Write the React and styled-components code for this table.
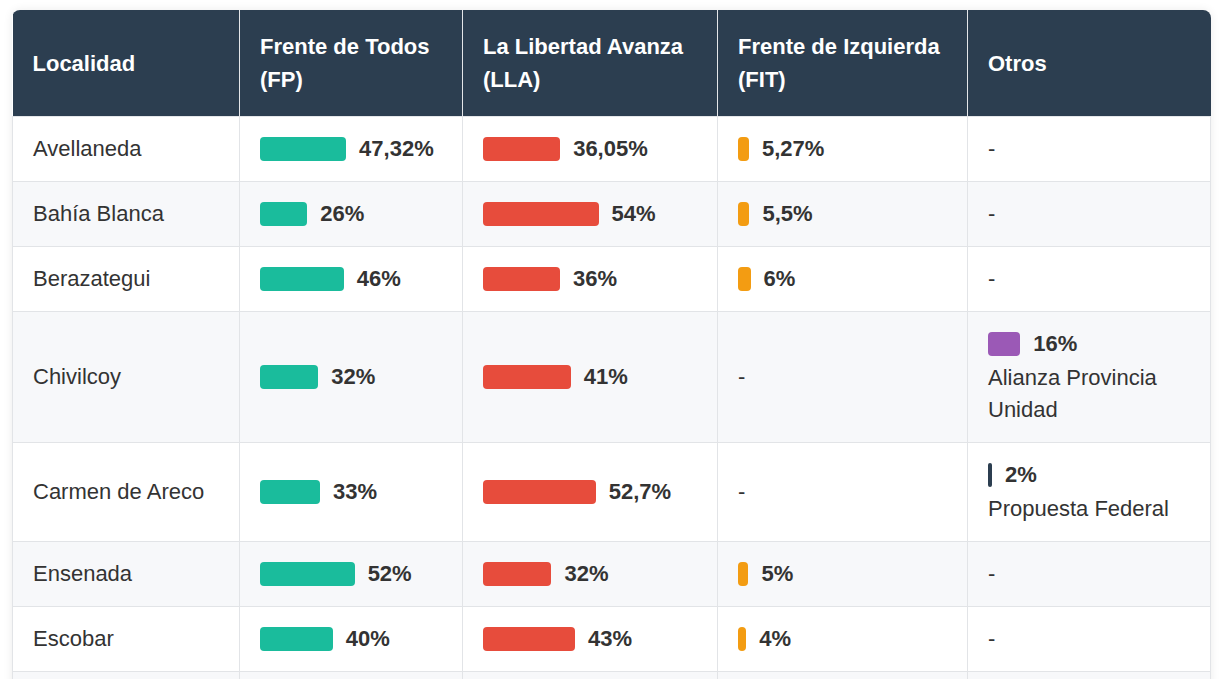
import React from "react";
import styled, { createGlobalStyle } from "styled-components";

const Global = createGlobalStyle`
  html, body { margin: 0; padding: 0; background: #ffffff; }
  body { font-family: "Liberation Sans", Arial, sans-serif; color: #333333; }
`;

const Wrap = styled.div`
  margin: 10px 10px 0 12px;
  border-radius: 8px;
  overflow: hidden;
  box-shadow: 0 0 10px rgba(0, 0, 0, 0.08);
`;

const Table = styled.table`
  width: 100%;
  border-collapse: collapse;
  table-layout: fixed;
  font-size: 22px;
  line-height: 32px;
`;

const Th = styled.th`
  background: #2c3e50;
  color: #ffffff;
  font-weight: bold;
  text-align: left;
  vertical-align: middle;
  line-height: 33px;
  padding: 20px 20px;
  border: 1px solid #e4e6e9;
  border-top: none;
  &:first-child { border-left: none; }
  &:last-child { border-right: none; }
`;

const Tr = styled.tr`
  background: ${(p) => (p.$alt ? "#f7f8fa" : "#ffffff")};
`;

const Td = styled.td`
  padding: 16px 20px;
  vertical-align: middle;
  border: 1px solid #e2e4e7;
  color: #333333;
`;

const BarLine = styled.div`
  display: flex;
  align-items: center;
  gap: 13px;
  min-height: 32px;
  margin-bottom: ${(p) => (p.$stacked ? "2px" : "0")};
`;

const Bar = styled.span`
  flex-shrink: 0;
  height: 24px;
  border-radius: 4px;
  background: ${(p) => p.$color};
`;

const Pct = styled.span`
  font-weight: bold;
  color: #333333;
  white-space: nowrap;
`;

const PartyName = styled.div`
  color: #333333;
`;

const COLORS = {
  fp: "#1abc9c",
  lla: "#e74c3c",
  fit: "#f39c12",
};

const rows = [
  { loc: "Avellaneda", fp: [47.32, "47,32%"], lla: [36.05, "36,05%"], fit: [5.27, "5,27%"] },
  { loc: "Bahía Blanca", fp: [26, "26%"], lla: [54, "54%"], fit: [5.5, "5,5%"] },
  { loc: "Berazategui", fp: [46, "46%"], lla: [36, "36%"], fit: [6, "6%"] },
  {
    loc: "Chivilcoy",
    fp: [32, "32%"],
    lla: [41, "41%"],
    fit: null,
    otros: { v: 16, label: "16%", name: "Alianza Provincia Unidad", color: "#9b59b6" },
  },
  {
    loc: "Carmen de Areco",
    fp: [33, "33%"],
    lla: [52.7, "52,7%"],
    fit: null,
    otros: { v: 2, label: "2%", name: "Propuesta Federal", color: "#2c3e50" },
  },
  { loc: "Ensenada", fp: [52, "52%"], lla: [32, "32%"], fit: [5, "5%"] },
  { loc: "Escobar", fp: [40, "40%"], lla: [43, "43%"], fit: [4, "4%"] },
  { loc: "General Pueyrredón", fp: [38, "38%"], lla: [42, "42%"], fit: [3, "3%"] },
];

function BarCell({ value, color }) {
  if (!value) return <Td>-</Td>;
  return (
    <Td>
      <BarLine>
        <Bar $color={color} style={{ width: `${value[0]}%` }} />
        <Pct>{value[1]}</Pct>
      </BarLine>
    </Td>
  );
}

export default function App() {
  return (
    <>
      <Global />
      <Wrap>
        <Table>
          <colgroup>
            <col style={{ width: 227 }} />
            <col style={{ width: 223 }} />
            <col style={{ width: 255 }} />
            <col style={{ width: 250 }} />
            <col />
          </colgroup>
          <thead>
            <tr>
              <Th>Localidad</Th>
              <Th>Frente de Todos (FP)</Th>
              <Th>La Libertad Avanza (LLA)</Th>
              <Th>Frente de Izquierda (FIT)</Th>
              <Th>Otros</Th>
            </tr>
          </thead>
          <tbody>
            {rows.map((r, i) => (
              <Tr key={r.loc} $alt={i % 2 === 1}>
                <Td>{r.loc}</Td>
                <BarCell value={r.fp} color={COLORS.fp} />
                <BarCell value={r.lla} color={COLORS.lla} />
                <BarCell value={r.fit} color={COLORS.fit} />
                {r.otros ? (
                  <Td>
                    <BarLine $stacked>
                      <Bar $color={r.otros.color} style={{ width: `${r.otros.v}%` }} />
                      <Pct>{r.otros.label}</Pct>
                    </BarLine>
                    <PartyName>{r.otros.name}</PartyName>
                  </Td>
                ) : (
                  <Td>-</Td>
                )}
              </Tr>
            ))}
          </tbody>
        </Table>
      </Wrap>
    </>
  );
}
